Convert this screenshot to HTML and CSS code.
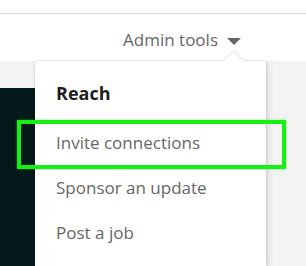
FILE: index.html
```html
<!DOCTYPE html>
<html lang="en">
<head>
    <meta charset="UTF-8">
    <meta name="viewport" content="width=device-width, initial-scale=1.0">
    <title>Admin tools</title>
    <link rel="stylesheet" href="styles.css">
</head>
<body>
    <div class="topbar"></div>

    <header class="page-header">
        <div class="admin-tools">
            <span>Admin tools</span>
            <span class="caret"></span>
        </div>
    </header>

    <main class="page-body">
        <div class="side-panel"></div>

        <div class="dropdown">
            <h3>Reach</h3>
            <ul>
                <li>Invite connections</li>
                <li>Sponsor an update</li>
                <li>Post a job</li>
            </ul>
        </div>

        <div class="highlight"></div>
    </main>
</body>
</html>
```

FILE: styles.css
```css
:root {
    --text-muted: #666666;
    --text-dark: #1d1d1d;
    --page-bg: #f3f3f3;
    --panel-dark: #041a1a;
    --highlight: #14f014;
}

* {
    margin: 0;
    padding: 0;
    box-sizing: border-box;
    font-family: 'Open Sans', 'Noto Sans', sans-serif;
}

body {
    background-color: #ffffff;
    width: 306px;
    height: 266px;
    overflow: hidden;
}

.topbar {
    height: 14px;
    border-bottom: 1px solid #d8d8d8;
}

.page-header {
    height: 47px;
    display: flex;
    justify-content: flex-end;
    align-items: flex-start;
    padding: 14px 65px 0 0;
}

.admin-tools {
    display: flex;
    align-items: center;
    gap: 9px;
    color: var(--text-muted);
    font-size: 17px;
    line-height: 24px;
}

.caret {
    width: 0;
    height: 0;
    border-left: 7px solid transparent;
    border-right: 7px solid transparent;
    border-top: 7px solid #666666;
    margin-top: 2px;
}

.page-body {
    position: relative;
    background-color: var(--page-bg);
    height: 205px;
    padding-top: 27px;
}

.side-panel {
    width: 35px;
    height: 100%;
    background-color: var(--panel-dark);
}

.dropdown {
    position: absolute;
    left: 35px;
    top: 0;
    width: 231px;
    height: 205px;
    background-color: #ffffff;
    border-radius: 2px 2px 0 0;
    box-shadow: 0 0 2px rgba(0, 0, 0, 0.25), 2px 2px 6px rgba(0, 0, 0, 0.12);
    padding: 20px 21px 0;
}

.dropdown::before {
    content: '';
    position: absolute;
    top: -7px;
    left: 192px;
    width: 13px;
    height: 13px;
    background-color: #ffffff;
    transform: rotate(45deg);
    box-shadow: -1px -1px 1px rgba(0, 0, 0, 0.12);
}

.dropdown h3 {
    color: var(--text-dark);
    font-size: 18px;
    font-weight: 700;
    line-height: 24px;
}

.dropdown ul {
    list-style: none;
    margin-top: 26px;
}

.dropdown li {
    color: var(--text-muted);
    font-size: 17px;
    line-height: 24px;
    margin-bottom: 21px;
}

.highlight {
    position: absolute;
    left: 17px;
    top: 59px;
    width: 269px;
    height: 49px;
    border: 4px solid var(--highlight);
    box-shadow: 0 0 2px rgba(20, 240, 20, 0.5);
}
```
